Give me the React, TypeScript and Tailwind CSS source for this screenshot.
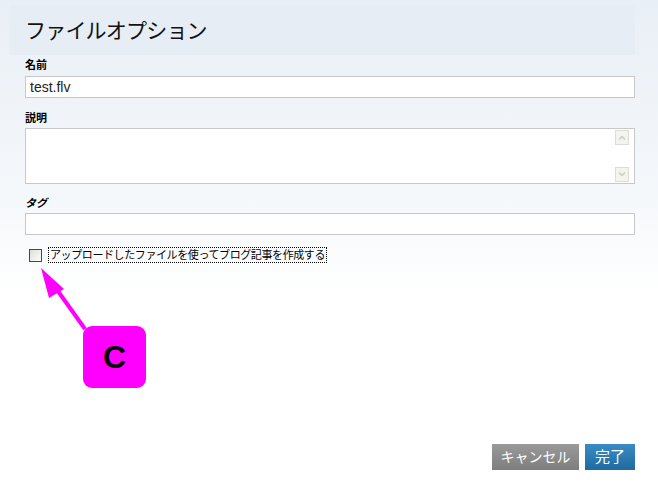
import React, { useState } from 'react';

const jp = { fontFamily: '"Liberation Sans", "Noto Sans CJK JP", sans-serif' };

// small up / down arrows in the textarea scrollbar
const ScrollArrow: React.FC<{ dir: 'up' | 'down' }> = ({ dir }) => (
  <div className="w-[14px] h-[15px] border border-[#dcdcd4] bg-[#f4f4ee] flex items-center justify-center">
    <svg width="8" height="5" viewBox="0 0 8 5">
      <path
        d={dir === 'up' ? 'M1 4.5 L4 1.5 L7 4.5' : 'M1 0.5 L4 3.5 L7 0.5'}
        fill="none"
        stroke="#c9c9bd"
        strokeWidth="1.4"
      />
    </svg>
  </div>
);

const App: React.FC = () => {
  const [name, setName] = useState('test.flv');
  const [desc, setDesc] = useState('');
  const [tags, setTags] = useState('');
  const [makePost, setMakePost] = useState(false);

  return (
    <div
      className="relative w-[658px] h-[493px] overflow-hidden bg-gradient-to-b from-[#e9eff6] via-[#f5f8fb] via-40% to-white to-60% pl-[10px] pr-[23px] pt-[5px] flex flex-col"
      style={jp}
    >
      {/* title band */}
      <div className="h-[50px] bg-[#e6edf5] pl-[15px] flex items-center">
        <h1 className="text-[21px] leading-none text-[#111] tracking-[-0.8px]">ファイルオプション</h1>
      </div>

      <div className="pl-[15px] flex flex-col">
        <label className="mt-[3px] text-[11px] font-bold text-black leading-[14px]">名前</label>
        <input
          value={name}
          onChange={(e) => setName(e.target.value)}
          className="mt-[4px] h-[22px] border border-[#c8c8c8] bg-white px-[4px] text-[14px] text-[#222] outline-none"
        />

        <label className="mt-[13px] text-[11px] font-bold text-black leading-[14px]">説明</label>
        <div className="mt-[3px] h-[56px] border border-[#c8c8c8] bg-white flex">
          <textarea
            value={desc}
            onChange={(e) => setDesc(e.target.value)}
            className="flex-1 resize-none outline-none px-[4px] text-[13px]"
          />
          <div className="w-[14px] mr-[5px] my-[1px] flex flex-col justify-between">
            <ScrollArrow dir="up" />
            <ScrollArrow dir="down" />
          </div>
        </div>

        <label className="mt-[12px] text-[11px] font-bold text-black leading-[14px] italic">タグ</label>
        <input
          value={tags}
          onChange={(e) => setTags(e.target.value)}
          className="mt-[3px] h-[22px] border border-[#c8c8c8] bg-white px-[4px] text-[13px] outline-none"
        />

        <label className="mt-[12px] ml-[4px] flex items-center gap-[6px] cursor-pointer">
          <input
            type="checkbox"
            checked={makePost}
            onChange={(e) => setMakePost(e.target.checked)}
            className="w-[13px] h-[13px] appearance-none border border-[#1c5180] bg-gradient-to-br from-[#dcdcd7] to-white"
          />
          <span className="text-[11px] leading-[14px] text-black border border-dotted border-black px-[1px] tracking-[-0.4px]">
            アップロードしたファイルを使ってブログ記事を作成する
          </span>
        </label>
      </div>

      <div className="mt-auto mb-[23px] flex justify-end gap-[6px]">
        <button className="h-[26px] w-[87px] bg-gradient-to-b from-[#9a9a9a] to-[#7e7e7e] text-white text-[14px]">
          キャンセル
        </button>
        <button className="h-[26px] w-[50px] bg-gradient-to-b from-[#3a8cc4] to-[#1f6aa0] text-white text-[15px]">
          完了
        </button>
      </div>

      {/* callout annotation */}
      <svg className="absolute left-0 top-0 pointer-events-none" width="658" height="493">
        <line x1="85" y1="329" x2="50" y2="280" stroke="#ff00ff" strokeWidth="4" />
        <polygon points="41,268 64,289 49,298" fill="#ff00ff" />
      </svg>
      <div className="absolute left-[83px] top-[326px] w-[63px] h-[62px] rounded-[9px] bg-[#ff00ff] flex items-center justify-center">
        <span className="text-[32px] font-bold text-black leading-none" style={{ fontFamily: '"Liberation Sans", sans-serif' }}>
          C
        </span>
      </div>
    </div>
  );
};

export default App;
